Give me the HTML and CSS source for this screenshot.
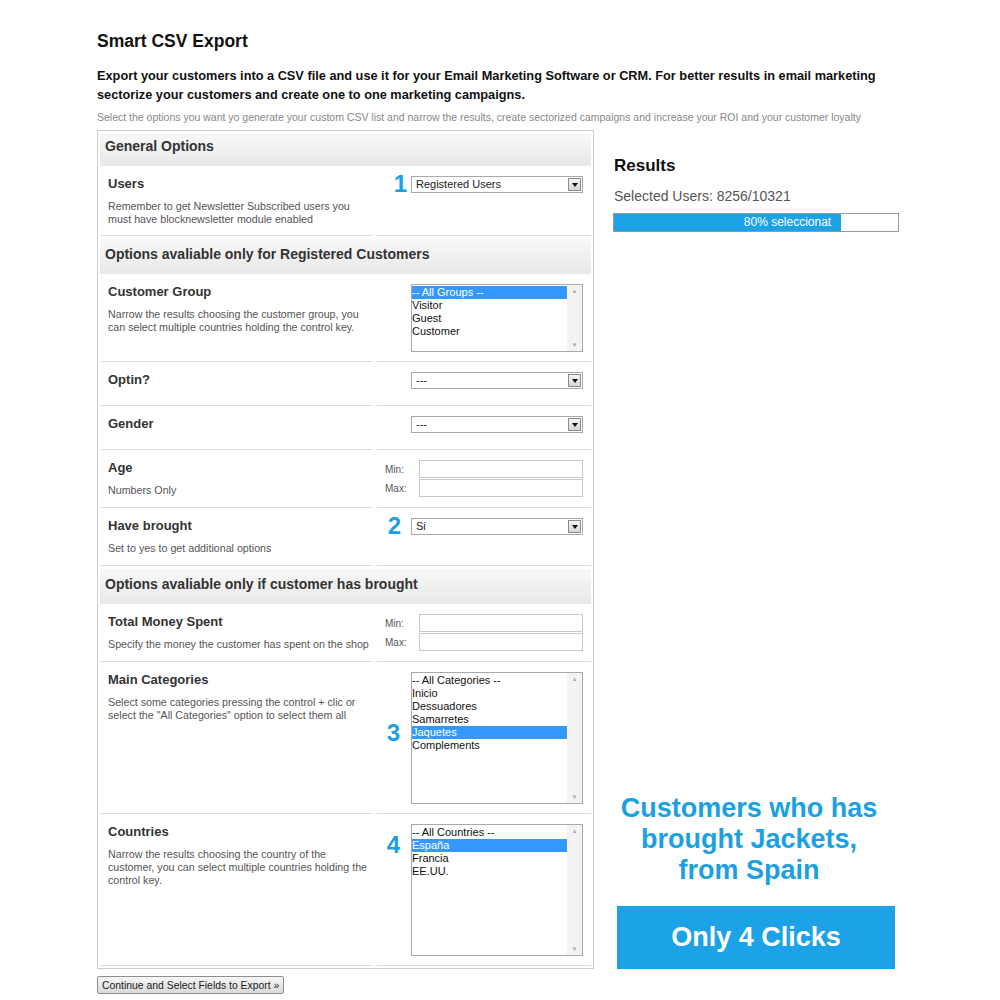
FILE: index.html
```html
<!DOCTYPE html>
<html lang="en">
<head>
  <meta charset="UTF-8">
  <title>Smart CSV Export</title>
  <link rel="stylesheet" href="styles.css">
</head>
<body>
  <div class="page">
    <h1 class="title">Smart CSV Export</h1>
    <p class="lead">Export your customers into a CSV file and use it for your Email Marketing Software or CRM. For better results in email marketing sectorize your customers and create one to one marketing campaigns.</p>
    <p class="hint">Select the options you want yo generate your custom CSV list and narrow the results, create sectorized campaigns and increase your ROI and your customer loyalty</p>

    <div class="main">
      <div class="form-col">
        <div class="panel">
          <div class="sec-head sec-first">General Options</div>
          <div class="row row-users">
            <div class="cell info">
              <div class="label">Users</div>
              <div class="desc">Remember to get Newsletter Subscribed users you must have blocknewsletter module enabled</div>
            </div>
            <div class="cell ctl">
              <span class="step step-one">1</span>
              <div class="select">Registered Users<span class="arrow"></span></div>
            </div>
          </div>

          <div class="sec-head sec-gap">Options avaliable only for Registered Customers</div>
          <div class="row">
            <div class="cell info">
              <div class="label">Customer Group</div>
              <div class="desc">Narrow the results choosing the customer group, you can select multiple countries holding the control key.</div>
            </div>
            <div class="cell ctl">
              <div class="listbox lb-short">
                <div class="opts">
                  <div class="opt on">-- All Groups --</div>
                  <div class="opt">Visitor</div>
                  <div class="opt">Guest</div>
                  <div class="opt">Customer</div>
                </div>
                <div class="sbar"><span>&#9650;</span><span>&#9660;</span></div>
              </div>
            </div>
          </div>
          <div class="row row-sm">
            <div class="cell info"><div class="label">Optin?</div></div>
            <div class="cell ctl"><div class="select">---<span class="arrow"></span></div></div>
          </div>
          <div class="row row-sm">
            <div class="cell info"><div class="label">Gender</div></div>
            <div class="cell ctl"><div class="select">---<span class="arrow"></span></div></div>
          </div>
          <div class="row row-md">
            <div class="cell info">
              <div class="label">Age</div>
              <div class="desc">Numbers Only</div>
            </div>
            <div class="cell ctl">
              <div class="range">
                <span>Min:</span><input type="text">
                <span>Max:</span><input type="text">
              </div>
            </div>
          </div>
          <div class="row row-md">
            <div class="cell info">
              <div class="label">Have brought</div>
              <div class="desc">Set to yes to get additional options</div>
            </div>
            <div class="cell ctl">
              <span class="step">2</span>
              <div class="select">Si<span class="arrow"></span></div>
            </div>
          </div>

          <div class="sec-head sec-gap">Options avaliable only if customer has brought</div>
          <div class="row row-md">
            <div class="cell info">
              <div class="label">Total Money Spent</div>
              <div class="desc">Specify the money the customer has spent on the shop</div>
            </div>
            <div class="cell ctl">
              <div class="range">
                <span>Min:</span><input type="text">
                <span>Max:</span><input type="text">
              </div>
            </div>
          </div>
          <div class="row">
            <div class="cell info">
              <div class="label">Main Categories</div>
              <div class="desc">Select some categories pressing the control + clic or select the "All Categories" option to select them all</div>
            </div>
            <div class="cell ctl">
              <span class="step step-low">3</span>
              <div class="listbox lb-long">
                <div class="opts">
                  <div class="opt">-- All Categories --</div>
                  <div class="opt">Inicio</div>
                  <div class="opt">Dessuadores</div>
                  <div class="opt">Samarretes</div>
                  <div class="opt on">Jaquetes</div>
                  <div class="opt">Complements</div>
                </div>
                <div class="sbar"><span>&#9650;</span><span>&#9660;</span></div>
              </div>
            </div>
          </div>
          <div class="row">
            <div class="cell info">
              <div class="label">Countries</div>
              <div class="desc">Narrow the results choosing the country of the customer, you can select multiple countries holding the control key.</div>
            </div>
            <div class="cell ctl">
              <span class="step step-high">4</span>
              <div class="listbox lb-long">
                <div class="opts">
                  <div class="opt">-- All Countries --</div>
                  <div class="opt on">España</div>
                  <div class="opt">Francia</div>
                  <div class="opt">EE.UU.</div>
                </div>
                <div class="sbar"><span>&#9650;</span><span>&#9660;</span></div>
              </div>
            </div>
          </div>
        </div>
        <button class="continue">Continue and Select Fields to Export &raquo;</button>
      </div>

      <div class="side">
        <div class="results">
          <h2>Results</h2>
          <div class="count">Selected Users: 8256/10321</div>
          <div class="bar"><div class="fill" style="width: 80%;">80% seleccionat</div></div>
        </div>
        <div class="promo">
          <div class="promo-text">Customers who has brought Jackets, from Spain</div>
          <div class="promo-box">Only 4 Clicks</div>
        </div>
      </div>
    </div>
  </div>
</body>
</html>
```

FILE: styles.css
```css
* {
  box-sizing: border-box;
}

body {
  margin: 0;
  font-family: "Liberation Sans", Arial, sans-serif;
  color: #333;
  background: #fff;
}

.page {
  width: 900px;
  padding: 31px 0 0 97px;
}

.title {
  margin: 0;
  font-size: 17.5px;
  line-height: 20px;
  color: #111;
}

.lead {
  margin: 15px 0 0;
  font-size: 12.75px;
  font-weight: bold;
  line-height: 19px;
  color: #111;
}

.hint {
  margin: 6px 0 0;
  font-size: 10.5px;
  line-height: 14px;
  color: #888;
}

.main {
  display: flex;
  gap: 19px;
  margin-top: 6px;
}

.form-col {
  width: 497px;
}

.panel {
  border: 1px solid #ccc;
  padding: 2px;
}

.sec-head {
  height: 35px;
  padding: 7px 0 0 5px;
  font-size: 14px;
  font-weight: bold;
  line-height: 16px;
  color: #333;
  background: linear-gradient(#f8f8f8, #e8e8e8);
}

.sec-first {
  height: 33px;
  padding-top: 5px;
}

.sec-gap {
  margin-top: 3px;
}

.row {
  display: grid;
  grid-template-columns: 273px 214px;
  column-gap: 4px;
}

.row-users { height: 70px; }
.row-sm { height: 44px; }
.row-md { height: 58px; }

.cell {
  border-bottom: 1px solid #dedede;
  padding: 10px 8px 9px;
}

.info {
  padding-right: 2px;
}

.label {
  font-size: 13px;
  font-weight: bold;
  line-height: 16px;
  color: #333;
}

.desc {
  margin-top: 8px;
  font-size: 10.7px;
  line-height: 13px;
  color: #555;
}

.ctl {
  display: flex;
  justify-content: flex-end;
  align-items: flex-start;
}

.step {
  margin-right: 10px;
  font-size: 24px;
  font-weight: bold;
  line-height: 16px;
  color: #1ba1e2;
}

.step-one { margin-right: 4px; }
.step-low { margin-top: 53px; margin-right: 11px; }
.step-high { margin-top: 13px; margin-right: 11px; }

.select {
  position: relative;
  width: 172px;
  height: 17px;
  border: 1px solid #a9a9a9;
  padding-left: 4px;
  font-size: 11px;
  line-height: 15px;
  color: #222;
  background: #fff;
}

.select .arrow {
  position: absolute;
  right: 1px;
  top: 1px;
  width: 13px;
  height: 13px;
  border: 1px solid #8c8c8c;
  background: linear-gradient(#f5f5f5, #d6d6d6);
}

.select .arrow::after {
  content: "";
  position: absolute;
  left: 3px;
  top: 4px;
  border-left: 3px solid transparent;
  border-right: 3px solid transparent;
  border-top: 4px solid #111;
}

.listbox {
  width: 172px;
  display: flex;
  border: 1px solid #a9a9a9;
  background: #fff;
}

.lb-short { height: 68px; }
.lb-long { height: 132px; }

.opts {
  flex: 1;
  padding-top: 1px;
  font-size: 11px;
  line-height: 13px;
  color: #111;
}

.opt.on {
  background: #3399ff;
  color: #fff;
}

.sbar {
  width: 15px;
  padding: 3px 0;
  display: flex;
  flex-direction: column;
  justify-content: space-between;
  align-items: center;
  font-size: 6px;
  color: #aaa;
  background: #f3f3f3;
}

.range {
  width: 100%;
  display: grid;
  grid-template-columns: 1fr 164px;
  row-gap: 1px;
  align-items: center;
  font-size: 10px;
  color: #555;
}

.range input {
  height: 18px;
  margin: 0;
  border: 1px solid #c8c8c8;
  background: #fff;
}

.continue {
  margin-top: 7px;
  height: 18px;
  padding: 0 4px;
  border: 1px solid #8e8e8e;
  border-radius: 2px;
  font-family: "Liberation Sans", Arial, sans-serif;
  font-size: 10.4px;
  color: #222;
  background: linear-gradient(#f7f7f7, #d9d9d9);
}

.side {
  width: 286px;
  padding-bottom: 25px;
  display: flex;
  flex-direction: column;
  justify-content: space-between;
}

.results {
  padding: 26px 0 0 1px;
}

.results h2 {
  margin: 0;
  font-size: 17px;
  line-height: 20px;
  color: #111;
}

.count {
  margin-top: 12px;
  font-size: 14px;
  line-height: 16px;
  color: #555;
}

.bar {
  margin: 9px 0 0 -1px;
  height: 19px;
  border: 1px solid #999;
  background: #fff;
}

.fill {
  height: 100%;
  padding-right: 10px;
  text-align: right;
  font-size: 12px;
  line-height: 17px;
  color: #fff;
  background: #1ca2e6;
}

.promo-text {
  padding-right: 14px;
  text-align: center;
  font-size: 27px;
  font-weight: bold;
  line-height: 31px;
  color: #1ba1e2;
}

.promo-box {
  margin: 20px 0 0 4px;
  width: 278px;
  height: 63px;
  display: flex;
  align-items: center;
  justify-content: center;
  font-size: 27px;
  font-weight: bold;
  color: #fff;
  background: #1ca2e6;
}
```
